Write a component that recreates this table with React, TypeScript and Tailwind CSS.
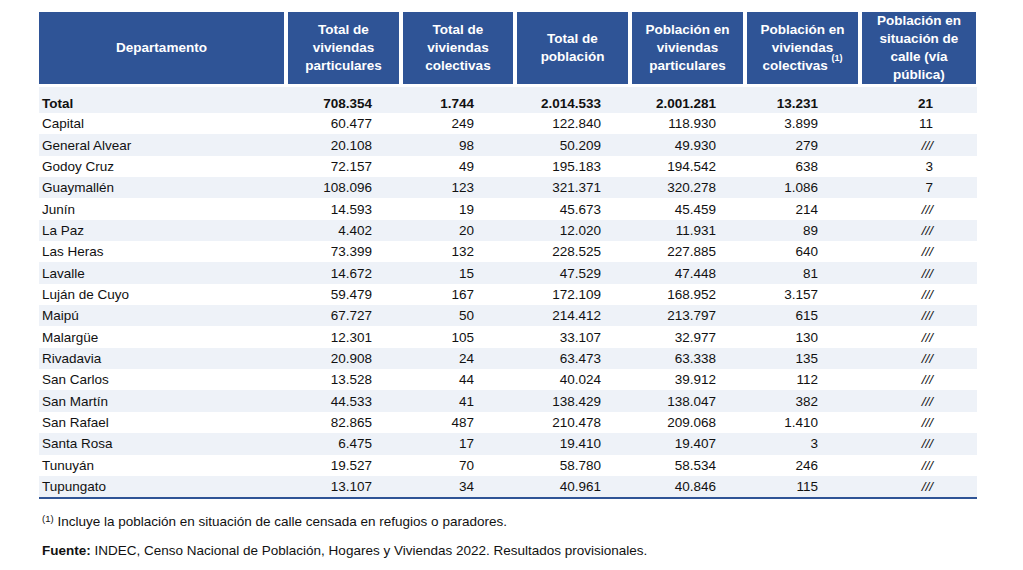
const rows: [string, string, string, string, string, string, string][] = [
  ["Capital", "60.477", "249", "122.840", "118.930", "3.899", "11"],
  ["General Alvear", "20.108", "98", "50.209", "49.930", "279", "///"],
  ["Godoy Cruz", "72.157", "49", "195.183", "194.542", "638", "3"],
  ["Guaymallén", "108.096", "123", "321.371", "320.278", "1.086", "7"],
  ["Junín", "14.593", "19", "45.673", "45.459", "214", "///"],
  ["La Paz", "4.402", "20", "12.020", "11.931", "89", "///"],
  ["Las Heras", "73.399", "132", "228.525", "227.885", "640", "///"],
  ["Lavalle", "14.672", "15", "47.529", "47.448", "81", "///"],
  ["Luján de Cuyo", "59.479", "167", "172.109", "168.952", "3.157", "///"],
  ["Maipú", "67.727", "50", "214.412", "213.797", "615", "///"],
  ["Malargüe", "12.301", "105", "33.107", "32.977", "130", "///"],
  ["Rivadavia", "20.908", "24", "63.473", "63.338", "135", "///"],
  ["San Carlos", "13.528", "44", "40.024", "39.912", "112", "///"],
  ["San Martín", "44.533", "41", "138.429", "138.047", "382", "///"],
  ["San Rafael", "82.865", "487", "210.478", "209.068", "1.410", "///"],
  ["Santa Rosa", "6.475", "17", "19.410", "19.407", "3", "///"],
  ["Tunuyán", "19.527", "70", "58.780", "58.534", "246", "///"],
  ["Tupungato", "13.107", "34", "40.961", "40.846", "115", "///"],
];

const total = ["Total", "708.354", "1.744", "2.014.533", "2.001.281", "13.231", "21"];

const grid =
  "grid grid-cols-[245px_111px_110px_111px_111px_111px_114px] gap-x-[4px]";

// right padding per numeric column so the figures line up like the source
const pads = ["pr-[27px]", "pr-[39px]", "pr-[27px]", "pr-[27px]", "pr-[40px]", "pr-[43px]"];

function Cells({ r, bold }: { r: string[]; bold?: boolean }) {
  return (
    <>
      <div className={`pl-[3px] ${bold ? "font-bold" : ""}`}>{r[0]}</div>
      {r.slice(1).map((v, i) => (
        <div
          key={i}
          className={`text-right ${pads[i]} ${bold ? "font-bold" : ""} ${
            v === "///" ? "italic" : ""
          }`}
        >
          {v}
        </div>
      ))}
    </>
  );
}

export default function App() {
  return (
    <div className="min-h-screen bg-white font-['Liberation_Sans',Arial,sans-serif] text-[13.5px] text-[#111]">
      <div className="ml-[39px] w-[938px] pt-[12px]">
        <div className={`${grid} h-[71px] text-white font-bold leading-[18px] text-center`}>
          <div className="bg-[#2f5496] flex items-center justify-center">Departamento</div>
          <div className="bg-[#2f5496] flex items-center justify-center">
            Total de<br />viviendas<br />particulares
          </div>
          <div className="bg-[#2f5496] flex items-center justify-center">
            Total de<br />viviendas<br />colectivas
          </div>
          <div className="bg-[#2f5496] flex items-center justify-center">
            Total de<br />población
          </div>
          <div className="bg-[#2f5496] flex items-center justify-center">
            Población en<br />viviendas<br />particulares
          </div>
          <div className="bg-[#2f5496] flex items-center justify-center">
            <span>
              Población en<br />viviendas<br />colectivas{" "}
              <sup className="text-[9px] align-[5px]">(1)</sup>
            </span>
          </div>
          <div className="bg-[#2f5496] flex items-center justify-center">
            Población en<br />situación de<br />calle (vía<br />pública)
          </div>
        </div>

        <div className={`${grid} mt-[4px] h-[26px] items-end pb-[2px] leading-[15px] bg-[#eef2f8]`}>
          <Cells r={total} bold />
        </div>

        <div className="border-b-2 border-[#2f5496]">
          {rows.map((r, i) => (
            <div
              key={r[0]}
              className={`${grid} h-[21.35px] items-center leading-[15px] ${
                i % 2 === 1 ? "bg-[#eef2f8]" : "bg-white"
              }`}
            >
              <Cells r={r} />
            </div>
          ))}
        </div>

        <div className="mt-[15px] pl-[3px] leading-[16px]">
          <span className="text-[9.5px] leading-none align-[4px]">(1)</span> Incluye la población en
          situación de calle censada en refugios o paradores.
        </div>
        <div className="mt-[13px] pl-[3px] leading-[16px]">
          <span className="font-bold">Fuente:</span> INDEC, Censo Nacional de Población, Hogares y
          Viviendas 2022. Resultados provisionales.
        </div>
      </div>
    </div>
  );
}
